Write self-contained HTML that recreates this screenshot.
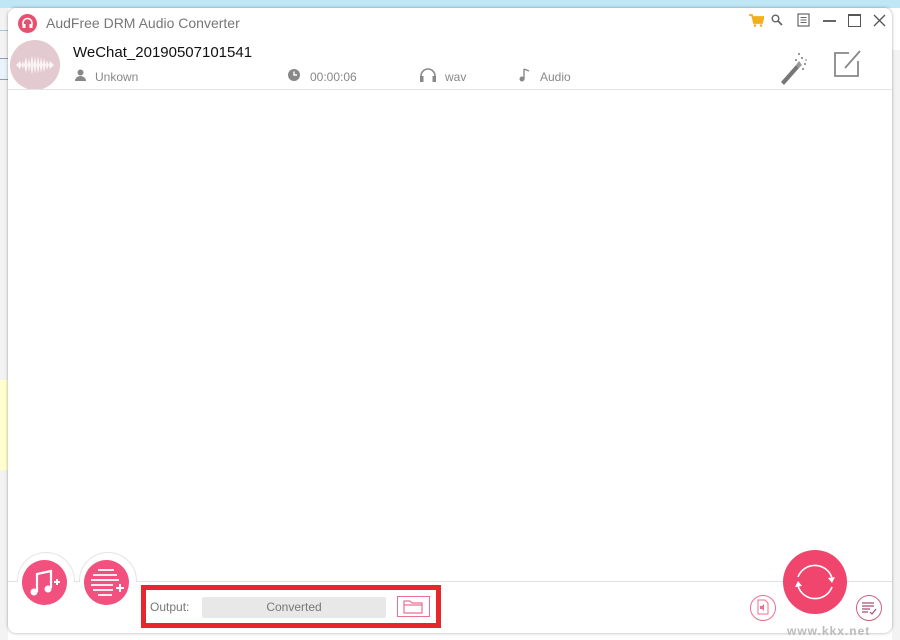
<!DOCTYPE html>
<html><head><meta charset="utf-8"><style>
body{margin:0;width:900px;height:640px;overflow:hidden;background:#fff;font-family:"Liberation Sans","Noto Sans CJK SC",sans-serif;position:relative}
.abs{position:absolute}
#win{position:absolute;left:8px;top:8px;width:884px;height:625px;background:#fff;border-radius:8px;box-shadow:0 0 3px rgba(0,0,0,.35);overflow:hidden}
.t{position:absolute;white-space:nowrap}
.pink{background:#f2517f}
</style></head><body>
<div class="abs" style="left:0;top:0;width:900px;height:8px;background:#bfe6f5"></div>
<div class="abs" style="left:0;top:8px;width:8px;height:632px;background:#f3f3f3"></div>
<div class="abs" style="left:0;top:30px;width:8px;height:1px;background:#9cc"></div>
<div class="abs" style="left:0;top:58px;width:8px;height:20px;background:#e8f3fb;border-top:1px solid #99b;border-bottom:1px solid #99b"></div>
<div class="abs" style="left:0;top:380px;width:8px;height:90px;background:#ffffd0"></div>
<div class="abs" style="left:892px;top:50px;width:8px;height:590px;background:#f3f3f3"></div>
<div id="win">
 <div class="t" style="left:10px;top:6px;width:19px;height:19px;border-radius:50%;background:#e9506f"></div>
 <svg class="abs" style="left:13px;top:9px" width="13" height="13" viewBox="0 0 13 13"><path d="M2 8V6a4.5 4.5 0 0 1 9 0v2" stroke="#fff" stroke-width="1.6" fill="none"/><rect x="1.5" y="7" width="3" height="4" fill="#fff"/><rect x="8.5" y="7" width="3" height="4" fill="#fff"/></svg>
 <div class="t" style="left:38px;top:7px;font-size:14px;color:#777">AudFree DRM Audio Converter</div>
 <div class="t" style="left:2px;top:32px;width:50px;height:50px;border-radius:50%;background:#e3c9d0"></div>
 <svg class="abs" style="left:6px;top:44px" width="44" height="26" viewBox="0 0 44 26"><path d="M2 13 L6 9 L9 17 L12 5 L15 20 L18 3 L21 22 L24 4 L27 21 L30 6 L33 18 L36 9 L40 13 L36 17 L33 8 L30 20 L27 5 L24 22 L21 4 L18 23 L15 6 L12 21 L9 9 L6 17Z" fill="#fff" opacity=".8"/></svg>
 <div class="t" style="left:65px;top:36px;font-size:15px;color:#111">WeChat_20190507101541</div>
 <svg class="abs" style="left:67px;top:61px" width="11" height="12"><circle cx="5.5" cy="3.5" r="3" fill="#888"/><path d="M0 12a5.5 5 0 0 1 11 0z" fill="#888"/></svg>
 <div class="t" style="left:87px;top:62px;font-size:12px;color:#888">Unkown</div>
 <svg class="abs" style="left:280px;top:61px" width="12" height="12"><circle cx="6" cy="6" r="6" fill="#888"/><path d="M6 2.5V6h3" stroke="#fff" stroke-width="1.4" fill="none"/></svg>
 <div class="t" style="left:302px;top:62px;font-size:12px;color:#888">00:00:06</div>
 <svg class="abs" style="left:411px;top:60px" width="18" height="14"><path d="M2 11V8a7 7 0 0 1 14 0v3" stroke="#888" stroke-width="1.6" fill="none"/><rect x="1" y="8" width="3.5" height="6" fill="#888"/><rect x="13.5" y="8" width="3.5" height="6" fill="#888"/></svg>
 <div class="t" style="left:437px;top:62px;font-size:12px;color:#888">wav</div>
 <svg class="abs" style="left:510px;top:60px" width="12" height="14"><path d="M6 1v10" stroke="#888" stroke-width="1.4"/><circle cx="4" cy="11" r="2.5" fill="#888"/><path d="M6 1l5 2" stroke="#888" stroke-width="1.4"/></svg>
 <div class="t" style="left:532px;top:62px;font-size:12px;color:#888">Audio</div>
 <svg class="abs" style="left:740px;top:5px" width="16" height="14"><path d="M1 2h3l2 8h8l1.5-6H5" stroke="#f2b01e" stroke-width="1.8" fill="#f2b01e"/><circle cx="7" cy="12.5" r="1.3" fill="#f2b01e"/><circle cx="13" cy="12.5" r="1.3" fill="#f2b01e"/></svg>
 <svg class="abs" style="left:763px;top:6px" width="12" height="12"><circle cx="4.5" cy="4.5" r="3.3" stroke="#666" stroke-width="1.4" fill="none"/><path d="M7 7l4 4" stroke="#666" stroke-width="1.8"/></svg>
 <svg class="abs" style="left:789px;top:5px" width="13" height="14"><rect x="1" y="1" width="11" height="12" stroke="#666" fill="none" stroke-width="1.2"/><path d="M3.5 4.5h6M3.5 7h6M3.5 9.5h6" stroke="#666"/></svg>
 <div class="abs" style="left:815px;top:12px;width:13px;height:1.5px;background:#666"></div>
 <div class="abs" style="left:840px;top:6px;width:11px;height:10px;border:1.5px solid #555;border-top-width:2px"></div>
 <svg class="abs" style="left:865px;top:6px" width="13" height="13"><path d="M1 1l11 11M12 1L1 12" stroke="#555" stroke-width="1.3"/></svg>
 <svg class="abs" style="left:770px;top:42px" width="30" height="36"><path d="M3 32l15-17 3 3-15 17z" fill="#777"/><path d="M18 15l3-4 3 4-3 3z" fill="#999"/><g fill="#777"><circle cx="18" cy="10" r="1"/><circle cx="24" cy="8" r="1"/><circle cx="27" cy="14" r="1"/><circle cx="25" cy="19" r="1"/><circle cx="21" cy="4" r="1"/><circle cx="28" cy="10" r="0.8"/></g></svg>
 <svg class="abs" style="left:824px;top:40px" width="32" height="32"><path d="M17 5H3v23h23V13" stroke="#888" stroke-width="1.8" fill="none"/><path d="M13 20L28 3" stroke="#888" stroke-width="1.8"/></svg>
 <div class="abs" style="left:0;top:81px;width:884px;height:1px;background:#e3e3e3"></div>
 <div class="abs" style="left:0;top:573px;width:884px;height:1px;background:#e0e0e0"></div>
 <div class="abs" style="left:9px;top:544px;width:56px;height:56px;border-radius:50%;background:#fff;border:1px solid #e4e4e4"></div>
 <div class="abs" style="left:71px;top:544px;width:56px;height:56px;border-radius:50%;background:#fff;border:1px solid #e4e4e4"></div>
 <div class="abs" style="left:0;top:574px;width:140px;height:30px;background:#fff"></div>
 <div class="abs pink" style="left:14px;top:552px;width:45px;height:45px;border-radius:50%"></div>
 <svg class="abs" style="left:14px;top:552px" width="45" height="45"><path d="M15 32V14l14-3v17" stroke="#fff" stroke-width="2.2" fill="none"/><circle cx="12" cy="32" r="3.5" fill="#fff"/><circle cx="26" cy="29" r="3.5" fill="#fff"/><path d="M32 22h6M35 19v6" stroke="#fff" stroke-width="2"/></svg>
 <div class="abs pink" style="left:76px;top:552px;width:45px;height:45px;border-radius:50%"></div>
 <svg class="abs" style="left:76px;top:552px" width="45" height="45"><path d="M14 10h16M9 15h24M7 20h28M7 25h22M9 30h20M14 35h14" stroke="#fff" stroke-width="1.8"/><path d="M32 28h8M36 24v8" stroke="#fff" stroke-width="2"/></svg>
 <div class="abs" style="left:133px;top:577px;width:290px;height:33px;border:5px solid #e8262b;background:#fff"></div>
 <div class="t" style="left:142px;top:592px;font-size:12px;color:#777">Output:</div>
 <div class="abs" style="left:194px;top:589px;width:184px;height:21px;background:#e8e8e8;border-radius:2px;text-align:center;line-height:21px;font-size:12px;color:#777">Converted</div>
 <div class="abs" style="left:389px;top:588px;width:33px;height:21px;border:1px solid #ee6f90;box-sizing:border-box"></div>
 <svg class="abs" style="left:395px;top:591px" width="21" height="15"><path d="M1 2h6l2 2h10v10H1z M1 6h18" stroke="#ee6f90" stroke-width="1.2" fill="none"/></svg>
 <div class="abs" style="left:742px;top:587px;width:24px;height:24px;border-radius:50%;border:1.3px solid #ee6f90"></div>
 <svg class="abs" style="left:748px;top:591px" width="14" height="17"><path d="M2 1h7l3 3v11H2z" stroke="#ee6f90" fill="none"/><path d="M4 7h2l2-2v7l-2-2H4z" fill="#ee6f90"/></svg>
 <div class="abs" style="left:848px;top:587px;width:24px;height:24px;border-radius:50%;border:1.3px solid #d06080"></div>
 <svg class="abs" style="left:853px;top:592px" width="16" height="16"><path d="M1 3h12M1 6h12M1 9h8M1 12h6M9 12l2 2 4-5" stroke="#a05070" stroke-width="1.2" fill="none"/></svg>
 <div class="abs" style="left:775px;top:542px;width:64px;height:64px;border-radius:50%;background:#f0466e"></div>
 <svg class="abs" style="left:775px;top:542px" width="64" height="64"><path d="M15 27A18 18 0 0 1 49 28" stroke="#fff" stroke-width="1.6" fill="none"/><path d="M45 28l4 5 3-6z" fill="#fff"/><path d="M49 37A18 18 0 0 1 15 36" stroke="#fff" stroke-width="1.6" fill="none"/><path d="M12 37l3-6 4 5z" fill="#fff"/></svg>
</div>
<div class="t" style="left:787px;top:624px;font-size:12px;font-weight:bold;color:#bbb;letter-spacing:1px">www.kkx.net</div>
</body></html>
